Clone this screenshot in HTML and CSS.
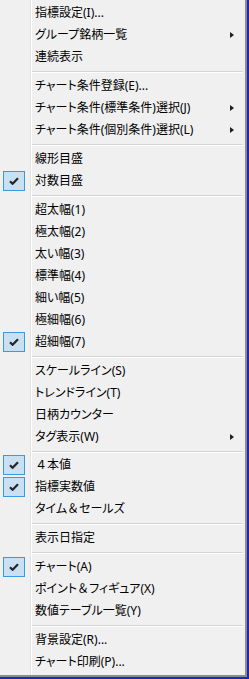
FILE: index.html
```
<!DOCTYPE html>
<html>
<head>
    <title>チャート メニュー</title>
    <link rel="stylesheet" href="styles.css">
</head>
<body>
    <div class="menu">
        <div class="item"><span class="gutter"></span><span class="label">指標設定(I)...</span></div>
        <div class="item"><span class="gutter"></span><span class="label">グループ銘柄一覧</span><span class="arrow"></span></div>
        <div class="item"><span class="gutter"></span><span class="label">連続表示</span></div>
        <div class="sep"></div>
        <div class="item"><span class="gutter"></span><span class="label">チャート条件登録(E)...</span></div>
        <div class="item"><span class="gutter"></span><span class="label">チャート条件(標準条件)選択(J)</span><span class="arrow"></span></div>
        <div class="item"><span class="gutter"></span><span class="label">チャート条件(個別条件)選択(L)</span><span class="arrow"></span></div>
        <div class="sep"></div>
        <div class="item"><span class="gutter"></span><span class="label">線形目盛</span></div>
        <div class="item checked"><span class="gutter"><span class="check"><svg width="10" height="8" viewBox="0 0 10 8"><path d="M1 4.2 L3.6 6.8 L9 1.2" fill="none" stroke="#262626" stroke-width="2.2"/></svg></span></span><span class="label">対数目盛</span></div>
        <div class="sep"></div>
        <div class="item"><span class="gutter"></span><span class="label">超太幅(1)</span></div>
        <div class="item"><span class="gutter"></span><span class="label">極太幅(2)</span></div>
        <div class="item"><span class="gutter"></span><span class="label">太い幅(3)</span></div>
        <div class="item"><span class="gutter"></span><span class="label">標準幅(4)</span></div>
        <div class="item"><span class="gutter"></span><span class="label">細い幅(5)</span></div>
        <div class="item"><span class="gutter"></span><span class="label">極細幅(6)</span></div>
        <div class="item checked"><span class="gutter"><span class="check"><svg width="10" height="8" viewBox="0 0 10 8"><path d="M1 4.2 L3.6 6.8 L9 1.2" fill="none" stroke="#262626" stroke-width="2.2"/></svg></span></span><span class="label">超細幅(7)</span></div>
        <div class="sep"></div>
        <div class="item"><span class="gutter"></span><span class="label">スケールライン(S)</span></div>
        <div class="item"><span class="gutter"></span><span class="label">トレンドライン(T)</span></div>
        <div class="item"><span class="gutter"></span><span class="label">日柄カウンター</span></div>
        <div class="item"><span class="gutter"></span><span class="label">タグ表示(W)</span><span class="arrow"></span></div>
        <div class="sep"></div>
        <div class="item checked"><span class="gutter"><span class="check"><svg width="10" height="8" viewBox="0 0 10 8"><path d="M1 4.2 L3.6 6.8 L9 1.2" fill="none" stroke="#262626" stroke-width="2.2"/></svg></span></span><span class="label"><span class="fw">４</span>本値</span></div>
        <div class="item checked"><span class="gutter"><span class="check"><svg width="10" height="8" viewBox="0 0 10 8"><path d="M1 4.2 L3.6 6.8 L9 1.2" fill="none" stroke="#262626" stroke-width="2.2"/></svg></span></span><span class="label">指標実数値</span></div>
        <div class="item"><span class="gutter"></span><span class="label">タイム<span class="fw">＆</span>セールズ</span></div>
        <div class="sep"></div>
        <div class="item"><span class="gutter"></span><span class="label">表示日指定</span></div>
        <div class="sep"></div>
        <div class="item checked"><span class="gutter"><span class="check"><svg width="10" height="8" viewBox="0 0 10 8"><path d="M1 4.2 L3.6 6.8 L9 1.2" fill="none" stroke="#262626" stroke-width="2.2"/></svg></span></span><span class="label">チャート(A)</span></div>
        <div class="item"><span class="gutter"></span><span class="label">ポイント<span class="fw">＆</span>フィギュア(X)</span></div>
        <div class="item"><span class="gutter"></span><span class="label">数値テーブル一覧(Y)</span></div>
        <div class="sep"></div>
        <div class="item"><span class="gutter"></span><span class="label">背景設定(R)...</span></div>
        <div class="item"><span class="gutter"></span><span class="label">チャート印刷(P)...</span></div>
    </div>
</body>
</html>
```

FILE: styles.css
```
body {
    margin: 0;
    padding: 0;
    background-color: #1a2bb0;
    font-family: 'Noto Sans', 'Noto Sans CJK JP', sans-serif;
}
.menu {
    width: 247px;
    height: 677px;
    box-sizing: border-box;
    padding: 2px 0;
    background: linear-gradient(to right, #f0f0f0 30px, #e2e2e2 30px, #e2e2e2 31px, #ffffff 31px, #ffffff 32px, #f0f0f0 32px);
    border-right: 2px solid #8c8c8c;
    border-bottom: 2px solid #8c8c8c;
    display: flex;
    flex-direction: column;
}
.item {
    height: 22px;
    display: flex;
    align-items: center;
    color: #000000;
    font-size: 12px;
}
.gutter {
    width: 35px;
    height: 22px;
    flex: none;
    display: flex;
    align-items: center;
}
.check {
    width: 22px;
    height: 20px;
    box-sizing: border-box;
    margin-left: 3px;
    background-color: #c9e0f3;
    border: 1px solid #3a9ae0;
    display: flex;
    align-items: center;
    justify-content: center;
}
.label {
    flex: 1;
    white-space: nowrap;
    line-height: 22px;
    font-feature-settings: "palt";
}
.fw {
    font-feature-settings: normal;
}
.arrow {
    width: 0;
    height: 0;
    border-top: 3.5px solid transparent;
    border-bottom: 3.5px solid transparent;
    border-left: 4px solid #1e1e1e;
    margin-right: 11px;
}
.sep {
    height: 7px;
    box-sizing: border-box;
    margin-left: 32px;
    margin-right: 2px;
    padding-top: 3px;
}
.sep::after {
    content: "";
    display: block;
    height: 1px;
    background-color: #d5d5d5;
    border-bottom: 1px solid #ffffff;
}
```
